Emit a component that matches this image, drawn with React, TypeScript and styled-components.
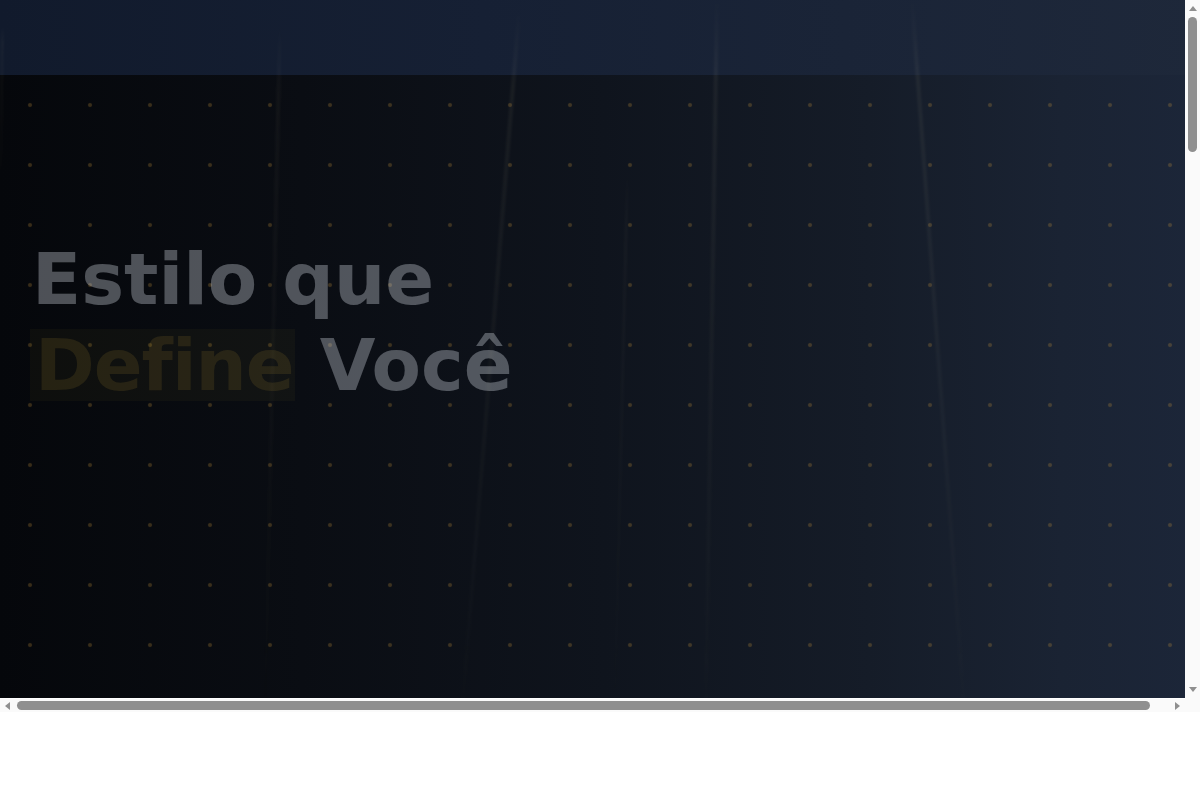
import React from "react";
import styled, { createGlobalStyle } from "styled-components";

const GlobalStyle = createGlobalStyle`
  html, body {
    margin: 0;
    padding: 0;
    background: #ffffff;
  }
  * { box-sizing: border-box; }
`;

const barGray = "#8f8f8f";
const trackGray = "#fafafa";

/* Window frame: content pane plus classic scrollbars */
const Frame = styled.div`
  display: grid;
  grid-template-columns: 1185px 15px;
  grid-template-rows: 698px 14px;
  width: 1200px;
  font-family: "DejaVu Sans", "Noto Sans", sans-serif;
`;

const Viewport = styled.div`
  overflow: hidden;
  position: relative;
`;

const VBar = styled.div`
  display: flex;
  flex-direction: column;
  align-items: center;
  background: ${trackGray};
`;

const HBar = styled.div`
  display: flex;
  align-items: center;
  background: ${trackGray};
  border-top: 1px solid #ffffff;
`;

const Corner = styled.div`
  background: ${trackGray};
`;

const ArrowBox = styled.div<{ $v?: boolean }>`
  flex: none;
  display: flex;
  align-items: center;
  justify-content: center;
  width: ${(p) => (p.$v ? "15px" : "15px")};
  height: ${(p) => (p.$v ? "17px" : "13px")};
`;

const Tri = styled.span<{ $dir: "up" | "down" | "left" | "right" }>`
  width: 0;
  height: 0;
  ${(p) =>
    p.$dir === "up"
      ? `border-left: 4.5px solid transparent; border-right: 4.5px solid transparent; border-bottom: 5px solid ${barGray}; margin-top: 0px;`
      : p.$dir === "down"
      ? `border-left: 4.5px solid transparent; border-right: 4.5px solid transparent; border-top: 5px solid ${barGray};`
      : p.$dir === "left"
      ? `border-top: 4.5px solid transparent; border-bottom: 4.5px solid transparent; border-right: 5px solid ${barGray};`
      : `border-top: 4.5px solid transparent; border-bottom: 4.5px solid transparent; border-left: 5px solid ${barGray};`}
`;

const VTrack = styled.div`
  flex: 1;
  width: 100%;
  display: flex;
  justify-content: center;
  padding-top: 0;
`;

const VThumb = styled.div`
  width: 9px;
  height: 135px;
  border-radius: 5px;
  background: ${barGray};
`;

const HTrack = styled.div`
  flex: 1;
  height: 100%;
  display: flex;
  align-items: center;
  padding-left: 2px;
`;

const HThumb = styled.div`
  width: 1133px;
  height: 9px;
  border-radius: 5px;
  background: ${barGray};
`;

const Page = styled.div`
  position: relative;
  width: 1206px;
  background: #0b0f17;
`;

const Header = styled.header`
  height: 75px;
  background: linear-gradient(90deg, #111a2c 0%, #162034 40%, #1a2437 70%, #1e283a 100%);
`;

const Hero = styled.section`
  position: relative;
  height: 800px;
  padding: 161px 0 0 32px;
  background-color: #0b0f17;
  background-image:
    radial-gradient(circle at 30px 30px, rgba(200, 150, 60, 0.26) 1.4px, rgba(200, 150, 60, 0.1) 2.1px, transparent 2.6px),
    linear-gradient(90deg, #05070b 0%, #0a0d13 25%, #0f141d 50%, #151c28 72%, #1a2333 88%, #1c2639 100%);
  background-size: 60px 60px, 100% 100%;
`;

const Title = styled.h1`
  margin: 0;
  font-family: "DejaVu Sans", "Noto Sans", sans-serif;
  font-weight: 700;
  font-size: 72px;
  line-height: 1.2;
  color: rgba(226, 232, 240, 0.33);
`;

const Accent = styled.span`
  display: inline-block;
  line-height: 1;
  margin-left: -2px;
  padding: 0 1px 0 5px;
  letter-spacing: -1px;
  background: rgba(212, 175, 55, 0.045);
  color: rgba(212, 175, 55, 0.12);
`;

const Section = styled.section<{ $h: number }>`
  height: ${(p) => p.$h}px;
  background: linear-gradient(90deg, #05070b 0%, #0f141d 50%, #1c2639 100%);
`;

const Streaks = styled.svg`
  position: absolute;
  top: 0;
  left: 0;
  width: 1206px;
  height: 875px;
  pointer-events: none;
`;

type Ray = { x1: number; y1: number; x2: number; y2: number; w: number; o: number };

const rays: Ray[] = [
  { x1: 1, y1: 25, x2: -1, y2: 200, w: 3, o: 0.7 },
  { x1: 278, y1: 22, x2: 262, y2: 760, w: 4, o: 0.7 },
  { x1: 517, y1: 12, x2: 456, y2: 760, w: 4, o: 1 },
  { x1: 715, y1: 0, x2: 703, y2: 760, w: 4, o: 1 },
  { x1: 910, y1: 0, x2: 966, y2: 760, w: 4, o: 1 },
  { x1: 626, y1: 170, x2: 612, y2: 760, w: 3, o: 0.6 },
];

export default function App() {
  return (
    <>
      <GlobalStyle />
      <Frame>
        <Viewport>
          <Page>
            <Header />
            <Hero>
              <Title>
                Estilo que
                <br />
                <Accent>Define</Accent> Você
              </Title>
            </Hero>
            <Section $h={900} />
            <Section $h={900} />
            <Section $h={805} />
            <Streaks viewBox="0 0 1206 875" aria-hidden="true">
              <defs>
                <linearGradient id="ray" x1="0" y1="0" x2="0" y2="1">
                  <stop offset="0" stopColor="#d9d2a8" stopOpacity="0" />
                  <stop offset="0.1" stopColor="#d9d2a8" stopOpacity="0.06" />
                  <stop offset="0.5" stopColor="#d9d2a8" stopOpacity="0.035" />
                  <stop offset="1" stopColor="#d9d2a8" stopOpacity="0" />
                </linearGradient>
                <filter id="soft" x="-2" y="0" width="5" height="1">
                  <feGaussianBlur stdDeviation="1.2" />
                </filter>
              </defs>
              {rays.map((r, i) => (
                <path
                  key={i}
                  d={`M${r.x1} ${r.y1} L${r.x1 + r.w} ${r.y1} L${r.x2 + r.w} ${r.y2} L${r.x2} ${r.y2} Z`}
                  fill="url(#ray)"
                  opacity={r.o}
                  filter="url(#soft)"
                />
              ))}
            </Streaks>
          </Page>
        </Viewport>
        <VBar aria-hidden="true">
          <ArrowBox $v>
            <Tri $dir="up" />
          </ArrowBox>
          <VTrack>
            <VThumb />
          </VTrack>
          <ArrowBox $v>
            <Tri $dir="down" />
          </ArrowBox>
        </VBar>
        <HBar aria-hidden="true">
          <ArrowBox>
            <Tri $dir="left" />
          </ArrowBox>
          <HTrack>
            <HThumb />
          </HTrack>
          <ArrowBox>
            <Tri $dir="right" />
          </ArrowBox>
        </HBar>
        <Corner />
      </Frame>
    </>
  );
}
